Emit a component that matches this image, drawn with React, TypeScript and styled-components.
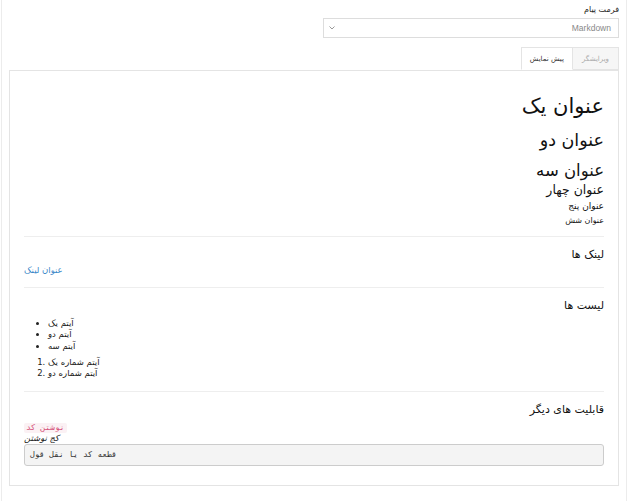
import styled, { createGlobalStyle } from "styled-components";

const GlobalStyle = createGlobalStyle`
  html, body {
    margin: 0;
    padding: 0;
    background: #fff;
  }
  body {
    font-family: "Liberation Sans", "DejaVu Sans", sans-serif;
    color: #333;
  }
`;

/**
 * outer frame
 */
const Frame = styled.div`
  box-sizing: border-box;
  width: 626px;
  min-height: 501px;
  margin: 0 1px;
  border-left: 1px solid #ececec;
  border-right: 1px solid #ececec;
  padding: 4px 7px 14px 8px;
  direction: rtl;
`;

const FieldLabel = styled.label`
  display: block;
  font-family: "DejaVu Sans", sans-serif;
  font-size: 8px;
  color: #222;
  line-height: 12px;
  margin: 0 0 2px;
`;

const SelectBox = styled.div`
  box-sizing: border-box;
  width: 296px;
  height: 20px;
  border: 1px solid #ddd;
  display: flex;
  align-items: center;
  justify-content: space-between;
  padding: 0 7px 0 5px;
  font-size: 8.5px;
  color: #888;
`;

const Chevron = styled.svg`
  width: 6px;
  height: 4px;
`;

const Tabs = styled.div`
  display: flex;
  margin-top: 9px;
  height: 23px;
`;

const Tab = styled.div<{ $active?: boolean }>`
  box-sizing: border-box;
  height: 23px;
  display: flex;
  align-items: center;
  font-size: 7px;
  font-family: "DejaVu Sans", sans-serif;
  border: 1px solid #e4e4e4;
  border-bottom-color: ${(p) => (p.$active ? "#fff" : "#e4e4e4")};
  border-left-width: ${(p) => (p.$active ? "1px" : "0")};
  background: ${(p) => (p.$active ? "#fff" : "#f6f6f6")};
  color: ${(p) => (p.$active ? "#333" : "#aaa")};
  padding: 0 ${(p) => (p.$active ? "8px" : "9px")};
  margin-bottom: -1px;
  position: relative;
  z-index: 1;
`;

const Panel = styled.div`
  box-sizing: border-box;
  width: 610px;
  border: 1px solid #e4e4e4;
  padding: 20px 14px 19px 14px;
  direction: ltr;
  font-family: "DejaVu Sans", sans-serif;
  font-size: 8.5px;
  line-height: 11.5px;
  color: #222;
`;

const Heading = styled.div<{ $size: number; $lh: number; $mt?: number }>`
  text-align: right;
  font-size: ${(p) => p.$size}px;
  line-height: ${(p) => p.$lh}px;
  margin-top: ${(p) => p.$mt ?? 0}px;
  color: #111;
`;

const Rule = styled.hr<{ $mt: number }>`
  border: 0;
  border-top: 1px solid #eee;
  margin: ${(p) => p.$mt}px 0 0;
`;

const Section = styled.div`
  padding-top: 10px;
`;

const LinkText = styled.a`
  color: #3a87c8;
  text-decoration: none;
  display: inline-block;
  margin-top: 2px;
`;

const Bullets = styled.ul`
  margin: 4px 0 0;
  padding-left: 24px;
`;

const Numbers = styled.ol`
  margin: 4.5px 0 0;
  padding-left: 24px;
`;

const InlineCode = styled.code`
  display: inline-block;
  margin-top: 5px;
  background: #fbf1f4;
  color: #d5527a;
  font-family: "DejaVu Sans Mono", monospace;
  font-size: 8px;
  line-height: 10px;
  padding: 0 2px;
  border-radius: 2px;
`;

const Italic = styled.div`
  font-style: italic;
  line-height: 10px;
`;

const CodeBlock = styled.pre`
  box-sizing: border-box;
  height: 22px;
  margin: 1px 0 0;
  background: #f4f4f4;
  border: 1px solid #ccc;
  border-radius: 3px;
  padding: 5px 5px;
  font-family: "DejaVu Sans Mono", monospace;
  font-size: 8px;
  line-height: 10px;
  color: #333;
`;

const App = () => {
  return (
    <>
      <GlobalStyle />
      <Frame>
        <FieldLabel>فرمت پیام</FieldLabel>
        <SelectBox>
          <span>Markdown</span>
          <Chevron viewBox="0 0 6 4">
            <path d="M0.5 0.5 L3 3 L5.5 0.5" fill="none" stroke="#999" strokeWidth="1" />
          </Chevron>
        </SelectBox>
        <Tabs>
          <Tab>ویرایشگر</Tab>
          <Tab $active>پیش نمایش</Tab>
        </Tabs>
        <Panel>
          <Heading $size={21} $lh={30}>عنوان یک</Heading>
          <Heading $size={17.5} $lh={24} $mt={7}>عنوان دو</Heading>
          <Heading $size={16.5} $lh={20} $mt={9}>عنوان سه</Heading>
          <Heading $size={12.5} $lh={16} $mt={1}>عنوان چهار</Heading>
          <Heading $size={9} $lh={12} $mt={2}>عنوان پنج</Heading>
          <Heading $size={8} $lh={11} $mt={3}>عنوان شش</Heading>
          <Rule $mt={10} />
          <Section>
            <Heading $size={11} $lh={16}>لینک ها</Heading>
            <LinkText href="#">عنوان لینک</LinkText>
          </Section>
          <Rule $mt={10} />
          <Section>
            <Heading $size={11} $lh={16}>لیست ها</Heading>
            <Bullets>
              <li>آیتم یک</li>
              <li>آیتم دو</li>
              <li>آیتم سه</li>
            </Bullets>
            <Numbers>
              <li>آیتم شماره یک</li>
              <li>آیتم شماره دو</li>
            </Numbers>
          </Section>
          <Rule $mt={11} />
          <Section>
            <Heading $size={11} $lh={16}>قابلیت های دیگر</Heading>
            <InlineCode>نوشتن کد</InlineCode>
            <Italic>کج نوشتن</Italic>
            <CodeBlock>قطعه کد یا نقل قول</CodeBlock>
          </Section>
        </Panel>
      </Frame>
    </>
  );
};

export default App;
